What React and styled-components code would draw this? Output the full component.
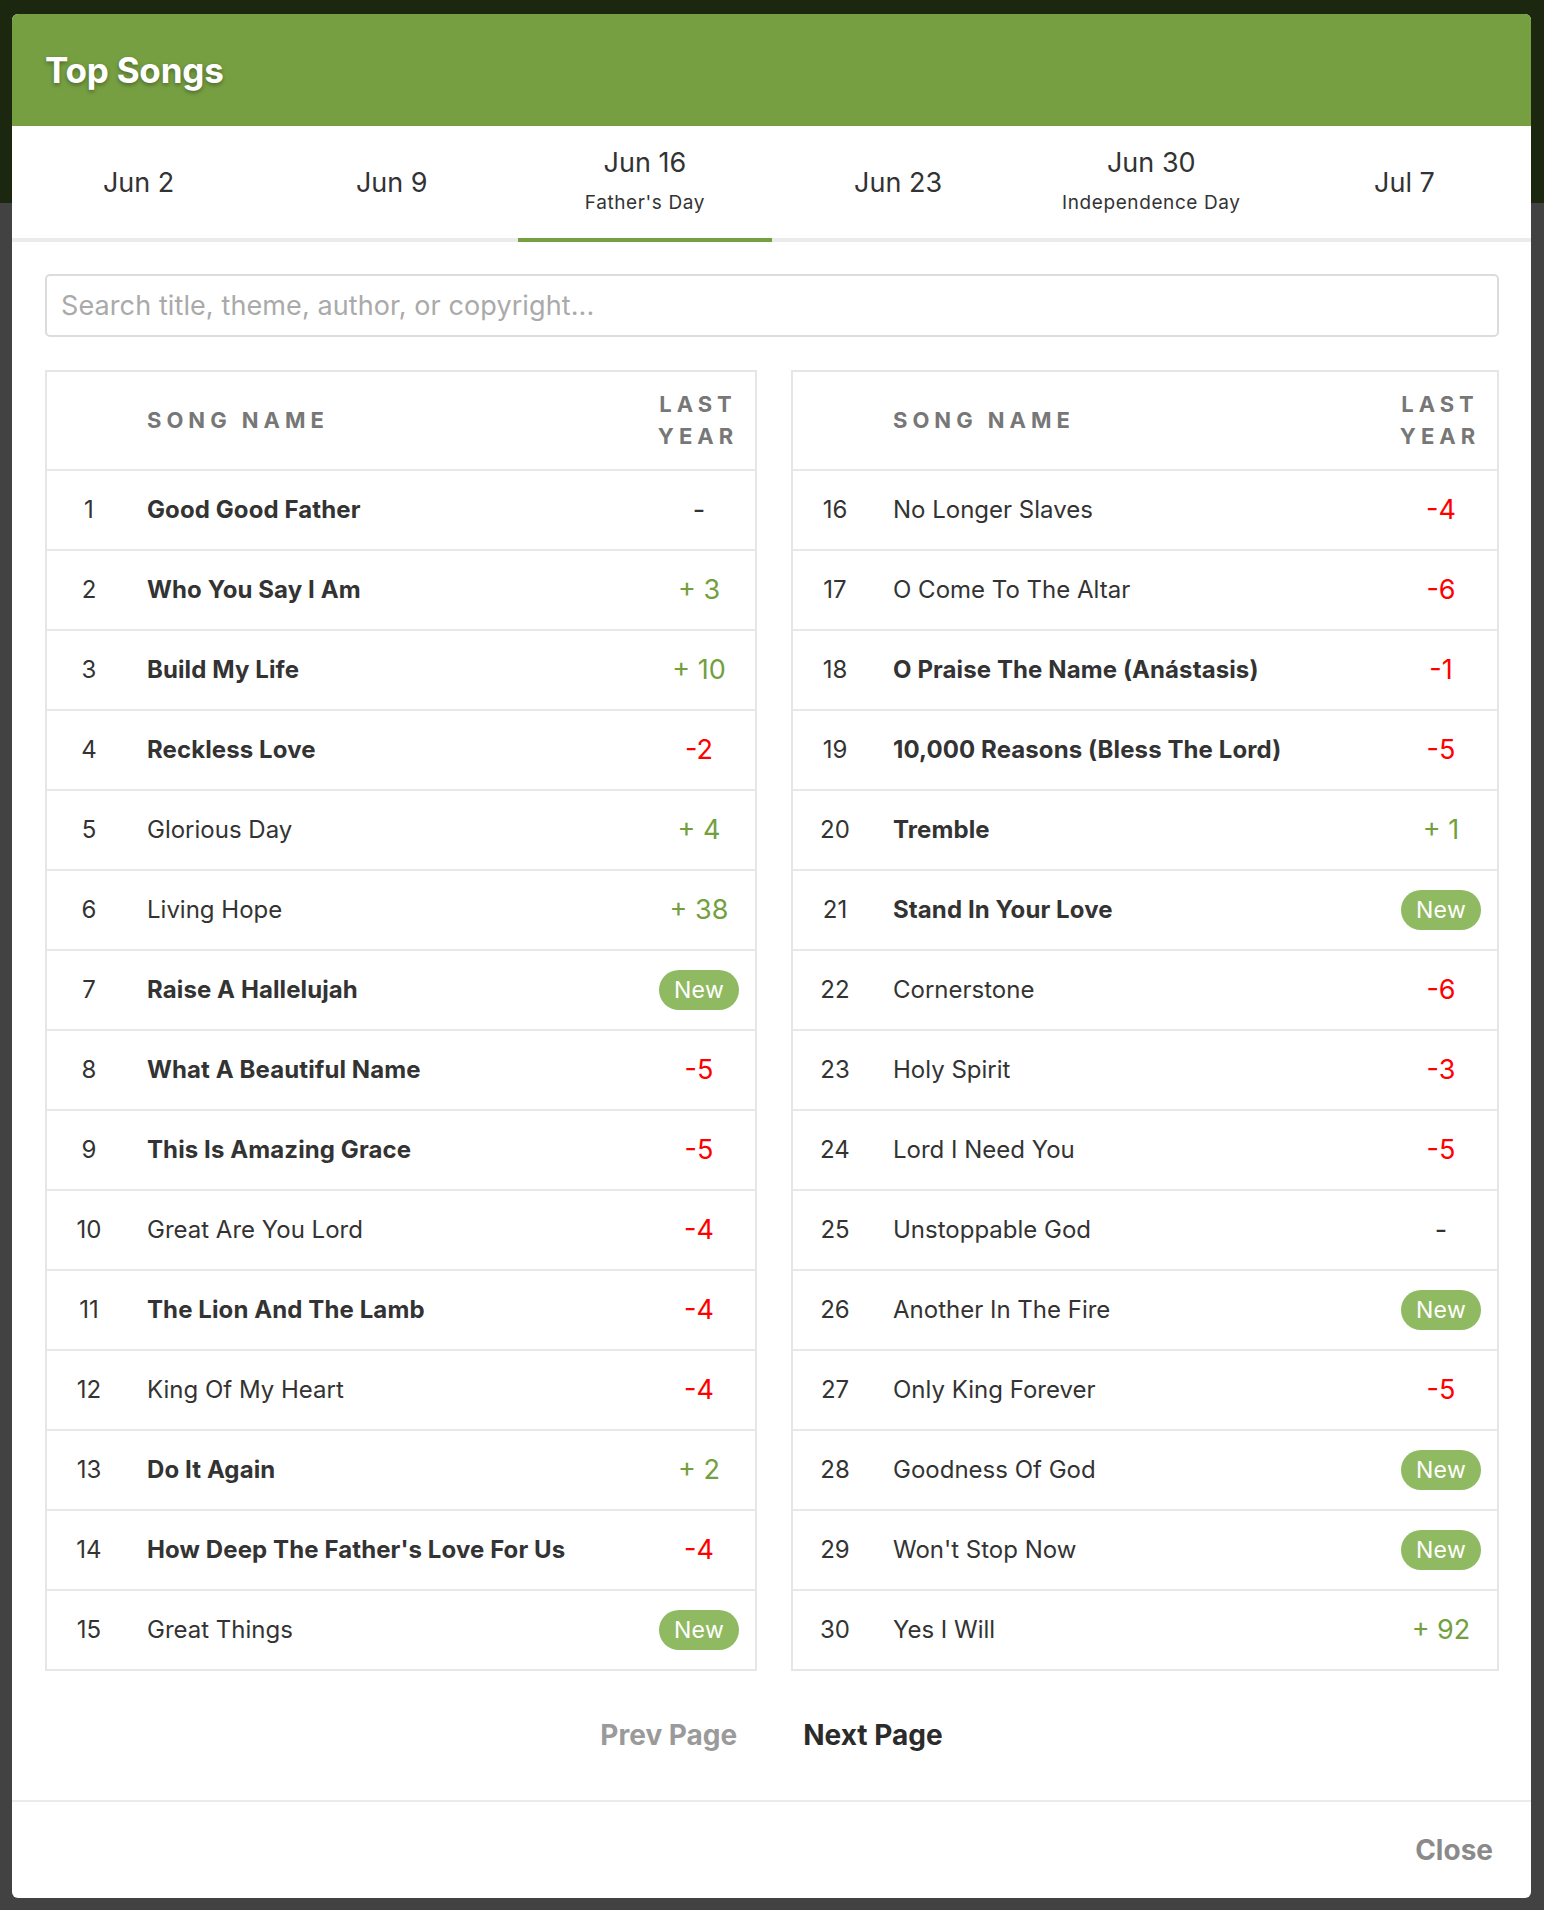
import React, { useState } from 'react';
import styled, { createGlobalStyle } from 'styled-components';

const GlobalStyle = createGlobalStyle`
  html, body {
    margin: 0;
    padding: 0;
  }
  body {
    font-family: Inter, "Liberation Sans", Arial, sans-serif;
    background: linear-gradient(#1c2710 0, #1c2710 203px, #424242 203px);
    min-height: 1910px;
  }
  * {
    box-sizing: border-box;
  }
`;

const Backdrop = styled.div`
  padding: 14px 13px 12px 12px;
`;

const Modal = styled.div`
  background: #fff;
  border-radius: 6px;
  overflow: hidden;
  height: 1884px;
  display: flex;
  flex-direction: column;
`;

const Header = styled.div`
  background-color: #769f42;
  height: 112px;
  display: flex;
  align-items: center;
  padding-left: 33px;
`;

const Title = styled.h1`
  margin: 0;
  color: #fff;
  font-size: 35px;
  font-weight: 700;
  letter-spacing: -0.2px;
  text-shadow: 0 2px 4px rgba(0, 0, 0, 0.35);
`;

const Tabs = styled.div`
  display: flex;
  height: 116px;
  border-bottom: 4px solid #ebebeb;
`;

const Tab = styled.button`
  flex: 1;
  background: none;
  border: none;
  border-bottom: 4px solid ${(p) => (p.$active ? '#769f42' : 'transparent')};
  margin-bottom: -4px;
  display: flex;
  flex-direction: column;
  align-items: center;
  justify-content: center;
  gap: 11px;
  cursor: pointer;
  font-family: inherit;
  color: #333;
  padding: ${(p) => (p.$hasNote ? '0 0 2px' : '3px 0 0')};
`;

const TabDate = styled.span`
  font-size: 27px;
  line-height: 34px;
`;

const TabNote = styled.span`
  font-size: 19px;
  line-height: 24px;
  letter-spacing: 0.6px;
`;

const Body = styled.div`
  padding: 32px 32px 0 33px;
`;

const Search = styled.input`
  width: 100%;
  height: 63px;
  border: 2px solid #dcdcdc;
  border-radius: 5px;
  padding: 0 14px;
  font-family: inherit;
  font-size: 27px;
  letter-spacing: 0.1px;
  color: #333;
  outline: none;

  &::placeholder {
    color: #aaa;
  }
`;

const Tables = styled.div`
  display: grid;
  grid-template-columns: 712fr 708fr;
  gap: 34px;
  margin-top: 33px;
`;

const Table = styled.div`
  border: 2px solid #e6e6e6;
`;

const Row = styled.div`
  display: grid;
  grid-template-columns: 84px 1fr 84px;
  align-items: center;
  height: ${(p) => (p.$head ? '97px' : '80px')};
  padding-right: 14px;
  border-top: ${(p) => (p.$head ? 'none' : '2px solid #e8e8e8')};
`;

const HeadLabel = styled.div`
  font-size: 22px;
  font-weight: 700;
  letter-spacing: 5px;
  color: #777;
  line-height: 32px;
  padding: ${(p) => (p.$right ? '0 2px 0 0' : '0 0 0 16px')};
  text-align: ${(p) => (p.$right ? 'center' : 'left')};
`;

const Rank = styled.div`
  font-size: 24px;
  color: #333;
  text-align: center;
`;

const Name = styled.div`
  font-size: 24px;
  color: #333;
  padding-left: 16px;
  font-weight: ${(p) => (p.$bold ? 700 : 400)};
  letter-spacing: ${(p) => (p.$bold ? '0.1px' : '0')};
  white-space: nowrap;
`;

const Change = styled.div`
  display: flex;
  justify-content: center;
  font-size: 27px;
  color: ${(p) => (p.$dir === 'up' ? '#72a03e' : p.$dir === 'down' ? '#ff0000' : '#333')};
`;

const Badge = styled.span`
  display: inline-flex;
  align-items: center;
  justify-content: center;
  width: 80px;
  height: 40px;
  border-radius: 20px;
  background: #8fba61;
  color: #fff;
  font-size: 23px;
  letter-spacing: 0.3px;
`;

const Pager = styled.div`
  height: 130px;
  display: flex;
  justify-content: center;
  align-items: center;
  gap: 66px;
`;

const PageButton = styled.button`
  background: none;
  border: none;
  padding: 0;
  font-family: inherit;
  font-size: 28px;
  font-weight: 700;
  color: ${(p) => (p.disabled ? '#9a9a9a' : '#2b2b2b')};
  cursor: ${(p) => (p.disabled ? 'default' : 'pointer')};
`;

const Footer = styled.div`
  margin-top: auto;
  border-top: 2px solid #ebebeb;
  height: 98px;
  display: flex;
  align-items: center;
  justify-content: flex-end;
  padding-right: 38px;
`;

const CloseButton = styled.button`
  background: none;
  border: none;
  padding: 0;
  font-family: inherit;
  font-size: 28px;
  font-weight: 700;
  color: #8a8a8a;
  cursor: pointer;
`;

const tabs = [
  { date: 'Jun 2' },
  { date: 'Jun 9' },
  { date: 'Jun 16', note: "Father's Day" },
  { date: 'Jun 23' },
  { date: 'Jun 30', note: 'Independence Day' },
  { date: 'Jul 7' },
];

// [name, bold, change]
const songs = [
  ['Good Good Father', true, '-'],
  ['Who You Say I Am', true, '+ 3'],
  ['Build My Life', true, '+ 10'],
  ['Reckless Love', true, '-2'],
  ['Glorious Day', false, '+ 4'],
  ['Living Hope', false, '+ 38'],
  ['Raise A Hallelujah', true, 'New'],
  ['What A Beautiful Name', true, '-5'],
  ['This Is Amazing Grace', true, '-5'],
  ['Great Are You Lord', false, '-4'],
  ['The Lion And The Lamb', true, '-4'],
  ['King Of My Heart', false, '-4'],
  ['Do It Again', true, '+ 2'],
  ["How Deep The Father's Love For Us", true, '-4'],
  ['Great Things', false, 'New'],
  ['No Longer Slaves', false, '-4'],
  ['O Come To The Altar', false, '-6'],
  ['O Praise The Name (Anástasis)', true, '-1'],
  ['10,000 Reasons (Bless The Lord)', true, '-5'],
  ['Tremble', true, '+ 1'],
  ['Stand In Your Love', true, 'New'],
  ['Cornerstone', false, '-6'],
  ['Holy Spirit', false, '-3'],
  ['Lord I Need You', false, '-5'],
  ['Unstoppable God', false, '-'],
  ['Another In The Fire', false, 'New'],
  ['Only King Forever', false, '-5'],
  ['Goodness Of God', false, 'New'],
  ["Won't Stop Now", false, 'New'],
  ['Yes I Will', false, '+ 92'],
];

function ChangeCell({ value }) {
  if (value === 'New') {
    return (
      <Change>
        <Badge>New</Badge>
      </Change>
    );
  }
  const dir = value.startsWith('+') ? 'up' : value === '-' ? 'same' : 'down';
  return <Change $dir={dir}>{value}</Change>;
}

function SongTable({ list, offset }) {
  return (
    <Table>
      <Row $head>
        <div />
        <HeadLabel>SONG NAME</HeadLabel>
        <HeadLabel $right>
          LAST
          <br />
          YEAR
        </HeadLabel>
      </Row>
      {list.map(([name, bold, change], i) => (
        <Row key={name}>
          <Rank>{offset + i + 1}</Rank>
          <Name $bold={bold}>{name}</Name>
          <ChangeCell value={change} />
        </Row>
      ))}
    </Table>
  );
}

export default function App() {
  const [active, setActive] = useState(2);
  const [query, setQuery] = useState('');

  return (
    <>
      <GlobalStyle />
      <Backdrop>
        <Modal>
          <Header>
            <Title>Top Songs</Title>
          </Header>
          <Tabs>
            {tabs.map((t, i) => (
              <Tab
                key={t.date}
                $active={i === active}
                $hasNote={!!t.note}
                onClick={() => setActive(i)}
              >
                <TabDate>{t.date}</TabDate>
                {t.note && <TabNote>{t.note}</TabNote>}
              </Tab>
            ))}
          </Tabs>
          <Body>
            <Search
              placeholder="Search title, theme, author, or copyright..."
              value={query}
              onChange={(e) => setQuery(e.target.value)}
            />
            <Tables>
              <SongTable list={songs.slice(0, 15)} offset={0} />
              <SongTable list={songs.slice(15)} offset={15} />
            </Tables>
          </Body>
          <Pager>
            <PageButton disabled>Prev Page</PageButton>
            <PageButton>Next Page</PageButton>
          </Pager>
          <Footer>
            <CloseButton>Close</CloseButton>
          </Footer>
        </Modal>
      </Backdrop>
    </>
  );
}
